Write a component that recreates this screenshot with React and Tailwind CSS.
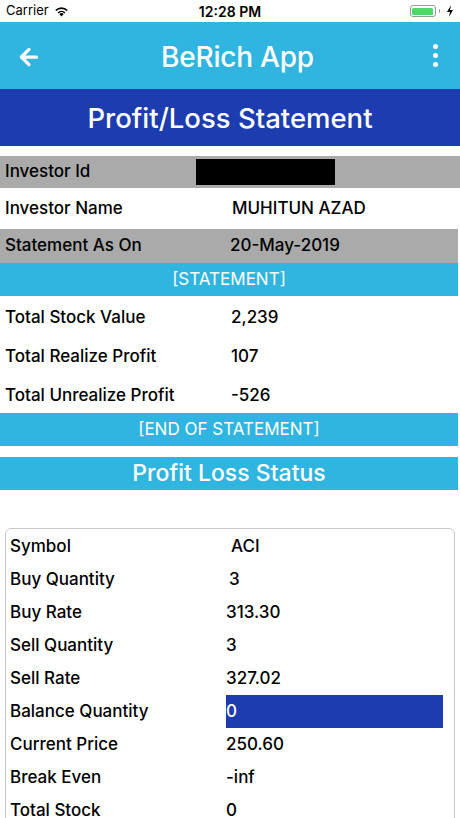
import { ArrowLeft } from 'lucide-react';

const font = { fontFamily: 'Inter, "Liberation Sans", sans-serif' };

const summary = [
  ['Total Stock Value', '2,239'],
  ['Total Realize Profit', '107'],
  ['Total Unrealize Profit', '-526'],
];

const status = [
  ['Symbol', 'ACI', 'pl-[5px]'],
  ['Buy Quantity', '3', 'pl-[3px]'],
  ['Buy Rate', '313.30', ''],
  ['Sell Quantity', '3', ''],
  ['Sell Rate', '327.02', ''],
  ['Balance Quantity', '0', 'hl'],
  ['Current Price', '250.60', ''],
  ['Break Even', '-inf', ''],
  ['Total Stock', '0', ''],
];

function StatusBar() {
  return (
    <div className="h-[22px] flex items-center justify-between px-[6px] bg-white text-black">
      <div className="flex items-center gap-[5px] text-[13px]">
        <span>Carrier</span>
        <svg width="15" height="11" viewBox="0 0 15 11">
          <path d="M7.5 10.5 L5.3 8 A3.2 3.2 0 0 1 9.7 8 Z" fill="#000" />
          <path d="M3.6 6.3 A5.6 5.6 0 0 1 11.4 6.3 L10.3 7.4 A4.1 4.1 0 0 0 4.7 7.4 Z" fill="#000" />
          <path d="M1.2 3.9 A9 9 0 0 1 13.8 3.9 L12.6 5.1 A7.4 7.4 0 0 0 2.4 5.1 Z" fill="#000" />
        </svg>
      </div>
      <span className="text-[14px] font-semibold absolute left-1/2 -translate-x-1/2">12:28 PM</span>
      <div className="flex items-center gap-[3px]">
        <div className="w-[26px] h-[12px] rounded-[3px] border border-[#9a9a9a] p-[1.5px]">
          <div className="w-full h-full rounded-[1.5px] bg-[#4cd964]" />
        </div>
        <div className="w-[1.5px] h-[4px] bg-[#9a9a9a] rounded-r" />
        <svg width="8" height="12" viewBox="0 0 8 12" className="ml-[3px]">
          <path d="M5 0 L1 7 H4 L3 12 L7 5 H4 Z" fill="#000" />
        </svg>
      </div>
    </div>
  );
}

export default function App() {
  return (
    <div className="w-[460px] min-h-screen bg-white text-black relative" style={font}>
      <StatusBar />

      {/* App bar */}
      <div className="h-[67px] bg-[#30b4e0] flex items-center justify-between pl-[16px] pr-[22px] pt-[3px] text-white">
        <ArrowLeft size={26} strokeWidth={3} />
        <span className="text-[28px] font-medium tracking-[-0.2px]">BeRich App</span>
        <div className="flex flex-col gap-[4px] -mt-[3px]">
          <div className="w-[5px] h-[5px] rounded-full bg-white" />
          <div className="w-[5px] h-[5px] rounded-full bg-white" />
          <div className="w-[5px] h-[5px] rounded-full bg-white" />
        </div>
      </div>

      {/* Page title */}
      <div className="h-[57px] bg-[#1c3caf] flex items-center justify-center pt-[2px] text-white text-[27.5px] font-medium">
        Profit/Loss Statement
      </div>

      <div className="mt-[10px] text-[17px] font-medium">
        <div className="h-[32px] bg-[#aaaaaa] flex items-center">
          <span className="w-[196px] pl-[5px]">Investor Id</span>
          <div className="w-[139px] h-[26px] bg-black" />
        </div>
        <div className="h-[41px] flex items-center">
          <span className="w-[232px] pl-[5px]">Investor Name</span>
          <span>MUHITUN AZAD</span>
        </div>
        <div className="h-[34px] w-[458px] bg-[#aaaaaa] flex items-center">
          <span className="w-[230px] pl-[5px]">Statement As On</span>
          <span>20-May-2019</span>
        </div>
        <div className="h-[33px] w-[458px] bg-[#30b4e0] flex items-center justify-center text-white font-normal">
          [STATEMENT]
        </div>
        {summary.map(([label, value]) => (
          <div key={label} className="h-[39px] flex items-center pt-[5px]">
            <span className="w-[231px] pl-[5px]">{label}</span>
            <span>{value}</span>
          </div>
        ))}
        <div className="h-[33px] w-[458px] bg-[#30b4e0] flex items-center justify-center text-white font-normal">
          [END OF STATEMENT]
        </div>
        <div className="mt-[11px] h-[33px] w-[458px] bg-[#30b4e0] flex items-center justify-center text-white text-[23px]">
          Profit Loss Status
        </div>
      </div>

      {/* Status card */}
      <div className="mt-[38px] mx-[5px] border border-[#c8c8c8] rounded-[6px] py-[1px] text-[17px] font-medium">
        {status.map(([label, value, extra]) => (
          <div key={label} className="h-[33px] flex items-center">
            <span className="w-[220px] pl-[4px]">{label}</span>
            {extra === 'hl' ? (
              <span className="w-[217px] h-[33px] bg-[#1c3caf] text-white flex items-center">{value}</span>
            ) : (
              <span className={extra}>{value}</span>
            )}
          </div>
        ))}
      </div>
    </div>
  );
}
